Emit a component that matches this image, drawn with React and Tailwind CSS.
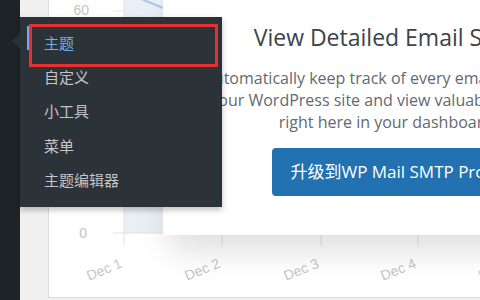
import React from 'react';

const menuItems = ['主题', '自定义', '小工具', '菜单', '主题编辑器'];
const ticks = [75, 173, 272, 369, 467];

const Chart = () => (
  <svg width="432" height="297" className="block">
    <text x="40" y="15" textAnchor="end" fontSize="14" fill="#c3c3c3" fontFamily="Liberation Sans, sans-serif">60</text>
    <text x="38" y="238" textAnchor="end" fontSize="14" fill="#c3c3c3" fontFamily="Liberation Sans, sans-serif">0</text>
    <line x1="64" y1="11" x2="432" y2="11" stroke="#ececec" />
    <rect x="75" y="0" width="60" height="233" fill="#e8f0f6" />
    <line x1="75" y1="0" x2="75" y2="233" stroke="#e3e3e3" />
    <polyline points="90,-2 114,8 140,18" fill="none" stroke="#a9c8e2" strokeWidth="2" />
    <line x1="64" y1="233" x2="432" y2="233" stroke="#e2e2e2" />
    {ticks.map((t, i) => (
      <g key={t}>
        <line x1={t} y1="233" x2={t} y2="246" stroke="#e2e2e2" />
        <text
          x={t - 1}
          y="267"
          textAnchor="end"
          fontSize="14"
          fill="#c6c6c6"
          fontFamily="Liberation Sans, sans-serif"
          transform={`rotate(-22 ${t - 1} 267)`}
        >
          Dec {i + 1}
        </text>
      </g>
    ))}
  </svg>
);

export default function App() {
  return (
    <div className="relative w-[480px] h-[300px] overflow-hidden flex bg-[#f0f0f1] font-['Open_Sans','Noto_Sans_CJK_SC',sans-serif]">
      {/* admin sidebar */}
      <div className="w-[20px] shrink-0 bg-[#1d2327]" />

      {/* page content */}
      <div className="flex-1 pl-[28px]">
        <div className="h-[298px] bg-white border-l border-b border-[#dcdcde]">
          <Chart />
        </div>
      </div>

      {/* upsell modal over the chart */}
      <div className="absolute left-[163px] top-[-20px] w-[450px] h-[255px] bg-white shadow-[0_22px_30px_-6px_rgba(0,0,0,0.13)] flex flex-col items-center pt-[42px] text-center">
        <h2 className="text-[23px] leading-[30px] text-[#3c434a] whitespace-nowrap">View Detailed Email Stats</h2>
        <p className="mt-[15px] text-[16px] leading-[22px] text-[#646970] whitespace-nowrap">
          Automatically keep track of every email sent from
          <br />
          your WordPress site and view valuable statistics
          <br />
          right here in your dashboard.
        </p>
        <button className="mt-[15px] h-[48px] px-[18px] rounded-[4px] bg-[#2271b1] text-white text-[17px] whitespace-nowrap">
          升级到WP Mail SMTP Pro
        </button>
      </div>

      {/* appearance flyout menu */}
      <div className="absolute left-[12px] top-[33px] w-0 h-0 border-y-[8px] border-y-transparent border-r-[8px] border-r-[#2c3338]" />
      <div className="absolute left-[20px] top-[17px] w-[202px] h-[190px] bg-[#2c3338] shadow-[0_3px_6px_rgba(0,0,0,0.25)] pt-[9px] font-['Noto_Sans_CJK_SC',sans-serif]">
        <div className="absolute left-[7px] top-[9px] w-[2px] h-[24px] bg-[#72aee6]" />
        {menuItems.map((item, i) => (
          <div
            key={item}
            className={`h-[34.3px] flex items-center pl-[24px] text-[15px] ${i === 0 ? 'text-[#72aee6]' : 'text-[#c3c4c7]'}`}
          >
            {item}
          </div>
        ))}
      </div>

      {/* screenshot annotation */}
      <div className="absolute left-[29px] top-[24px] w-[189px] h-[43px] border-[3px] border-[#e8312f]" />
    </div>
  );
}
